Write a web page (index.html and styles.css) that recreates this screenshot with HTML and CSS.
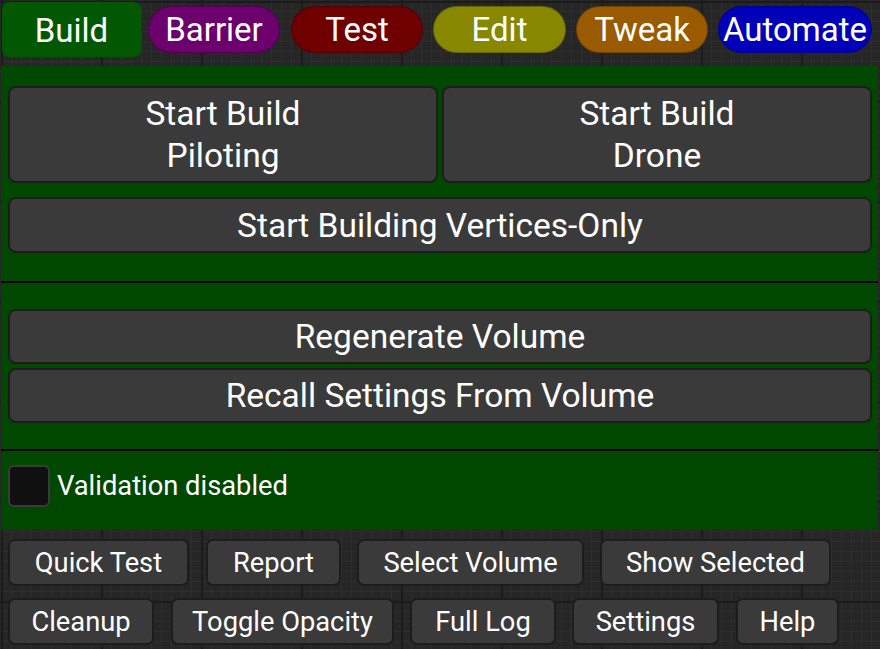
FILE: index.html
```html
<!DOCTYPE html>
<html>
<head>
<meta charset="utf-8">
<link rel="stylesheet" href="styles.css">
</head>
<body>
<div class="app">
  <div class="tabs">
    <div class="tab tab-build">Build</div>
    <div class="tab pill pill-barrier">Barrier</div>
    <div class="tab pill pill-test">Test</div>
    <div class="tab pill pill-edit">Edit</div>
    <div class="tab pill pill-tweak">Tweak</div>
    <div class="tab pill pill-automate">Automate</div>
  </div>
  <div class="panel">
    <div class="section section-start">
      <div class="row2">
        <div class="btn btn-tall">Start Build<br>Piloting</div>
        <div class="btn btn-tall">Start Build<br>Drone</div>
      </div>
      <div class="btn btn-wide">Start Building Vertices-Only</div>
    </div>
    <div class="section section-volume">
      <div class="btn btn-wide">Regenerate Volume</div>
      <div class="btn btn-wide">Recall Settings From Volume</div>
    </div>
    <div class="section section-check">
      <div class="checkbox"></div>
      <span class="check-label">Validation disabled</span>
    </div>
  </div>
  <div class="toolbar">
    <div class="tool-row">
      <div class="tbtn w-quick">Quick Test</div>
      <div class="tbtn w-report">Report</div>
      <div class="tbtn w-select">Select Volume</div>
      <div class="tbtn w-show">Show Selected</div>
    </div>
    <div class="tool-row">
      <div class="tbtn w-cleanup">Cleanup</div>
      <div class="tbtn w-toggle">Toggle Opacity</div>
      <div class="tbtn w-log">Full Log</div>
      <div class="tbtn w-settings">Settings</div>
      <div class="tbtn w-help">Help</div>
    </div>
  </div>
</div>
</body>
</html>
```

FILE: styles.css
```css
html, body {
  margin: 0;
  padding: 0;
}
body {
  width: 880px;
  height: 649px;
  overflow: hidden;
  font-family: Roboto, "Liberation Sans", sans-serif;
  color: #fff;
  background-color: #262626;
  background-image:
    linear-gradient(90deg, #1b1b1b 2px, transparent 2px),
    linear-gradient(#1b1b1b 2px, transparent 2px),
    linear-gradient(90deg, #2e2e2e 1px, transparent 1px),
    linear-gradient(#2e2e2e 1px, transparent 1px);
  background-size: 100px 100px, 100px 100px, 10px 10px, 10px 10px;
  background-position: 1px 1px, 1px 1px, 1px 1px, 1px 1px;
}
.app {
  display: flex;
  flex-direction: column;
}
.tabs {
  height: 66px;
  display: flex;
  align-items: flex-start;
  box-sizing: border-box;
  padding-left: 2px;
}
.tab {
  display: flex;
  align-items: center;
  justify-content: center;
  font-size: 33px;
  box-sizing: border-box;
  white-space: nowrap;
}
.tab-build {
  margin-top: 2px;
  width: 139px;
  height: 55px;
  background: #015801;
  border-radius: 7px;
  padding-top: 1px;
}
.pill {
  margin-top: 6px;
  height: 47px;
  border-radius: 24px;
  border: 1px solid rgba(0,0,0,0.25);
}
.pill-barrier { margin-left: 7px; width: 132px; background: #6c006c; }
.pill-test { margin-left: 11px; width: 132px; background: #6e0000; }
.pill-edit { margin-left: 10px; width: 133px; background: #888800; }
.pill-tweak { margin-left: 10px; width: 132px; background: #9a5a00; }
.pill-automate { margin-left: 10px; width: 154px; background: #0000b8; }

.panel {
  margin-left: 1px;
  width: 877px;
  background: #004800;
  display: flex;
  flex-direction: column;
}
.section {
  box-sizing: border-box;
  padding-left: 7px;
  padding-right: 6px;
}
.section-start {
  height: 217px;
  padding-top: 20px;
  border-bottom: 2px solid #000;
  display: flex;
  flex-direction: column;
  gap: 14px;
}
.section-volume {
  height: 168px;
  padding-top: 26px;
  border-bottom: 2px solid #000;
  display: flex;
  flex-direction: column;
  gap: 4px;
}
.section-check {
  height: 79px;
  padding-top: 14px;
  display: flex;
  align-items: flex-start;
  gap: 7px;
}
.row2 {
  display: flex;
  gap: 4px;
}
.btn {
  box-sizing: border-box;
  background: #3a3a3a;
  border: 2px solid #1d1d1d;
  border-radius: 8px;
  display: flex;
  align-items: center;
  justify-content: center;
  text-align: center;
  font-size: 33.5px;
}
.btn-tall {
  flex: 1;
  height: 97px;
  line-height: 42px;
}
.btn-wide {
  height: 56px;
}
.section-volume .btn-wide {
  height: 55px;
}
.checkbox {
  width: 42px;
  height: 42px;
  box-sizing: border-box;
  background: #101010;
  border: 2px solid #3a3a3a;
  border-radius: 6px;
}
.check-label {
  font-size: 27.3px;
  line-height: 42px;
}

.toolbar {
  padding-top: 9px;
  padding-left: 8px;
  display: flex;
  flex-direction: column;
  gap: 12px;
}
.tool-row {
  display: flex;
  gap: 16px;
}
.tbtn {
  box-sizing: border-box;
  height: 47px;
  background: #3a3a3a;
  border: 2px solid #1d1d1d;
  border-radius: 7px;
  display: flex;
  align-items: center;
  justify-content: center;
  font-size: 27.3px;
  white-space: nowrap;
}
.w-quick { width: 181px; margin-right: 1px; }
.w-report { width: 135px; }
.w-select { width: 227px; }
.w-show { width: 231px; }
.w-cleanup { width: 146px; margin-right: 1px; }
.w-toggle { width: 223px; }
.w-log { width: 146px; }
.w-settings { width: 147px; margin-right: 1px; }
.w-help { width: 103px; }
```
